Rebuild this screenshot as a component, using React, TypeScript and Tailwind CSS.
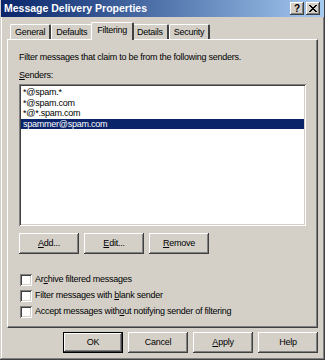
const raised =
  'shadow-[inset_-1px_-1px_#404040,inset_1px_1px_#ffffff,inset_-2px_-2px_#808080,inset_2px_2px_#d4d0c8]'
const sunken =
  'shadow-[inset_1px_1px_#808080,inset_-1px_-1px_#ffffff,inset_2px_2px_#404040,inset_-2px_-2px_#d4d0c8]'

const font = { fontFamily: '"Liberation Sans", Arial, sans-serif' }

function Btn({ label, u, def }: { label: string; u?: number; def?: boolean }) {
  const text =
    u === undefined ? (
      label
    ) : (
      <>
        {label.slice(0, u)}
        <span className="underline">{label[u]}</span>
        {label.slice(u + 1)}
      </>
    )
  return (
    <div
      className={`w-[60px] h-[21px] flex items-center justify-center bg-[#d4d0c8] text-black ${
        def ? 'border border-black' : ''
      }`}
    >
      <div className={`w-full h-full flex items-center justify-center ${raised}`}>{text}</div>
    </div>
  )
}

function Check({ children }: { children: React.ReactNode }) {
  return (
    <div className="flex items-center gap-[3px] h-[15px]">
      <div className={`w-[12px] h-[12px] bg-white ${sunken}`} />
      <span>{children}</span>
    </div>
  )
}

const tabs = ['General', 'Defaults', 'Filtering', 'Details', 'Security']
const senders = ['*@spam.*', '*@spam.com', '*@*.spam.com', 'spammer@spam.com']

export default function App() {
  return (
    <div
      className="w-[325px] h-[360px] bg-[#d4d0c8] text-[9px] leading-[11px] tracking-[-0.25px] text-black flex flex-col shadow-[inset_-1px_-1px_#404040,inset_1px_1px_#d4d0c8,inset_-2px_-2px_#808080,inset_2px_2px_#ffffff] overflow-hidden"
      style={font}
    >
      {/* title bar */}
      <div className="h-[17px] mx-[1px] flex items-center justify-between pl-[3px] pr-[4px] bg-gradient-to-r from-[#0a246a] to-[#a6caf0] tracking-normal">
        <span className="text-white font-bold text-[10.5px]">Message Delivery Properties</span>
        <div className="flex gap-[2px]">
          <div className={`w-[14px] h-[13px] bg-[#d4d0c8] flex items-center justify-center font-bold text-[10px] ${raised}`}>
            ?
          </div>
          <div className={`w-[14px] h-[13px] bg-[#d4d0c8] flex items-center justify-center ${raised}`}>
            <svg width="8" height="7" viewBox="0 0 8 7">
              <path d="M0 0 L7 7 M1 0 L8 7 M7 0 L0 7 M8 0 L1 7" stroke="black" strokeWidth="1" />
            </svg>
          </div>
        </div>
      </div>

      {/* tabs */}
      <div className="flex items-end h-[22px] pl-[10px]">
        {tabs.map((t) => {
          const sel = t === 'Filtering'
          return (
            <div
              key={t}
              className={`relative flex items-center justify-center bg-[#d4d0c8] border-t border-l border-white border-r-[2px] border-r-[#404040] rounded-t-[2px] ${
                sel ? 'h-[18px] -mx-[2px] z-10 px-[5px] -mb-[1px] pb-[2px]' : 'h-[15px] px-[4px]'
              }`}
            >
              {t}
            </div>
          )
        })}
      </div>

      {/* panel */}
      <div className="mx-[7px] h-[289px] border-t border-l border-white border-r border-b border-r-[#404040] border-b-[#404040] shadow-[inset_-1px_-1px_#808080] px-[11px] pt-[12px] flex flex-col">
        <div>Filter messages that claim to be from the following senders.</div>
        <div className="mt-[7px]">
          <span className="underline">S</span>enders:
        </div>
        <div className={`mt-[3px] w-[287px] h-[142px] bg-white ${sunken} p-[2px] pt-[3px]`}>
          {senders.map((s, i) => (
            <div
              key={s}
              className={`h-[10.5px] leading-[10.5px] pl-[2px] ${
                i === 3 ? 'bg-[#0a246a] text-white' : ''
              }`}
            >
              {s}
            </div>
          ))}
        </div>
        <div className="flex gap-[5px] mt-[7px]">
          <Btn label="Add..." u={0} />
          <Btn label="Edit..." u={0} />
          <Btn label="Remove" u={0} />
        </div>
        <div className="flex flex-col gap-[1px] mt-[18px] pl-[1px]">
          <Check>
            Ar<span className="underline">c</span>hive filtered messages
          </Check>
          <Check>
            Filter messages with <span className="underline">b</span>lank sender
          </Check>
          <Check>
            Accept messages with<span className="underline">o</span>ut notifying sender of filtering
          </Check>
        </div>
      </div>

      {/* bottom buttons */}
      <div className="flex justify-end gap-[5px] pr-[7px] mt-[4px]">
        <Btn label="OK" def />
        <Btn label="Cancel" />
        <Btn label="Apply" u={0} />
        <Btn label="Help" />
      </div>
    </div>
  )
}
